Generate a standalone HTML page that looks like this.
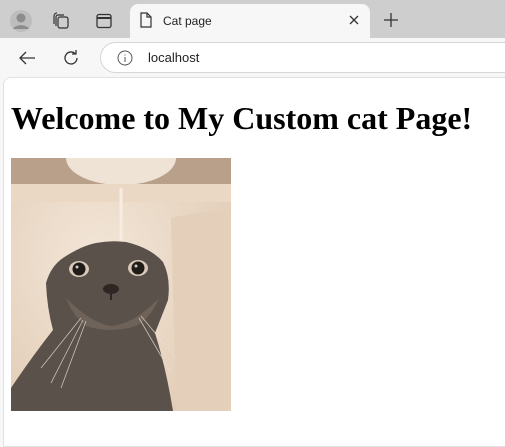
<!DOCTYPE html>
<html><head><meta charset="utf-8"><style>
*{margin:0;padding:0;box-sizing:border-box}
body{width:505px;height:435px;overflow:hidden;background:#f7f7f7;font-family:"Liberation Sans",sans-serif;position:relative}
.top{position:absolute;left:0;top:0;width:505px;height:38px;background:#cecece}
.tab{position:absolute;left:130px;top:4px;width:240px;height:36px;background:#f7f7f7;border-radius:8px 8px 0 0}
.tab span{position:absolute;left:33px;top:10px;font-size:12px;color:#222}
.addr{position:absolute;left:100px;top:42px;width:420px;height:31px;background:#fff;border:1px solid #d6d6d6;border-radius:16px}
.addr span{position:absolute;left:47px;top:7px;font-size:13px;color:#222}
.page{position:absolute;left:3px;top:77px;width:510px;height:370px;background:#fff;border:1px solid #e2e2e2;border-radius:8px 0 0 0}
h1{position:absolute;left:7px;top:22px;font-family:"Liberation Serif",serif;font-size:32px;font-weight:bold;color:#000;white-space:nowrap}
svg{position:absolute}
</style></head><body>
<div class="top"></div>
<div class="tab"><span>Cat page</span></div>
<svg style="left:9px;top:9px" width="24" height="24" viewBox="0 0 24 24"><circle cx="12" cy="12" r="11" fill="#bdbdbd"/><circle cx="12" cy="9" r="4.5" fill="#8c8c8c"/><path d="M4 20c2-5 14-5 16 0" fill="#8c8c8c"/></svg>
<svg style="left:52px;top:12px" width="18" height="18" viewBox="0 0 18 18" fill="none" stroke="#333" stroke-width="1.2"><rect x="6" y="5" width="10" height="11" rx="2"/><path d="M4 14V5a2 2 0 0 1 2-2h6M2 12V4a3 3 0 0 1 3-3"/></svg>
<svg style="left:96px;top:13px" width="16" height="16" viewBox="0 0 16 16" fill="none" stroke="#333" stroke-width="1.3"><rect x="1" y="1.5" width="14" height="13" rx="2"/><path d="M1 5h14" stroke-width="2"/></svg>
<svg style="left:139px;top:12px" width="14" height="16" viewBox="0 0 14 16" fill="none" stroke="#333" stroke-width="1.2"><path d="M2 1h6l4 4v10H2z"/><path d="M8 1v4h4"/></svg>
<svg style="left:349px;top:15px" width="10" height="10" viewBox="0 0 10 10" stroke="#333" stroke-width="1.3"><path d="M1 1l8 8M9 1l-8 8"/></svg>
<svg style="left:384px;top:13px" width="14" height="14" viewBox="0 0 14 14" stroke="#333" stroke-width="1.3"><path d="M7 0v14M0 7h14"/></svg>
<svg style="left:18px;top:50px" width="18" height="16" viewBox="0 0 18 16" fill="none" stroke="#333" stroke-width="1.3"><path d="M17 8H2M8 2L2 8l6 6"/></svg>
<svg style="left:62px;top:49px" width="18" height="18" viewBox="0 0 18 18" fill="none" stroke="#333" stroke-width="1.3"><path d="M15 9a6 6 0 1 1-2-4.5"/><path d="M14 1v4h-4"/></svg>
<div class="addr"><span>localhost</span>
<svg style="position:absolute;left:16px;top:7px" width="16" height="16" viewBox="0 0 16 16" fill="none" stroke="#555" stroke-width="1"><circle cx="8" cy="8" r="7"/><path d="M8 7v5M8 4.5v1"/></svg></div>
<div class="page"><h1>Welcome to My Custom cat Page!</h1></div>
<svg style="left:11px;top:158px" width="220" height="253" viewBox="0 0 220 253">
<defs><radialGradient id="g" cx="0.4" cy="0.4" r="0.7"><stop offset="0" stop-color="#f3e6d8"/><stop offset="1" stop-color="#e2cdb7"/></radialGradient></defs>
<rect width="220" height="253" fill="url(#g)"/>
<rect width="220" height="26" fill="#b9a08a"/>
<ellipse cx="110" cy="0" rx="55" ry="27" fill="#efe3d6"/>
<rect x="0" y="26" width="220" height="18" fill="#ead8c5"/>
<path d="M160 60Q200 50 220 55V253H165Z" fill="#e4cfba"/>
<path d="M110 30V100" stroke="#f6ece2" stroke-width="3"/>
<path d="M0 253V230Q20 200 42 172Q36 150 35 125Q40 108 52 100Q70 88 85 85Q100 82 115 84Q140 90 152 104Q160 120 157 142Q150 160 144 175Q155 210 162 253Z" fill="#5a514a"/>
<path d="M55 140Q80 165 100 168Q125 165 148 140Q140 160 125 168Q100 176 75 168Q62 158 55 140Z" fill="#6e6259"/>
<ellipse cx="68" cy="111" rx="10" ry="8" fill="#d9c8b8"/>
<ellipse cx="127" cy="110" rx="10" ry="8" fill="#d9c8b8"/>
<circle cx="68" cy="111" r="6.5" fill="#221c18"/>
<circle cx="127" cy="110" r="6.5" fill="#221c18"/>
<circle cx="66" cy="109" r="1.5" fill="#ccc"/>
<circle cx="125" cy="108" r="1.5" fill="#ccc"/>
<ellipse cx="100" cy="131" rx="8" ry="5" fill="#2e2622"/>
<path d="M100 135V142" stroke="#2e2622" stroke-width="2"/>
<g stroke="#e8ddd2" stroke-width="0.8" fill="none" opacity="0.8"><path d="M70 160L30 210M72 162L40 225M75 163L50 230M130 158L165 200M128 160L160 215"/></g>
</svg>
</body></html>
